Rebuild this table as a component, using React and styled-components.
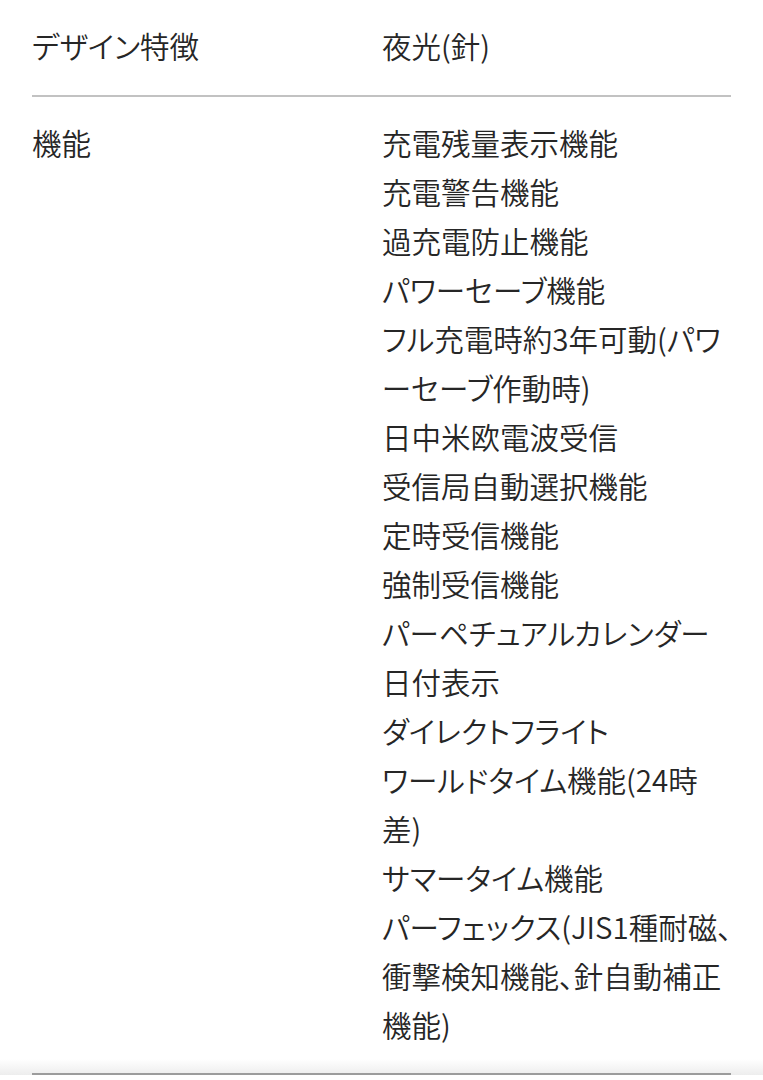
import React from 'react';
import styled, { createGlobalStyle } from 'styled-components';

const GlobalStyle = createGlobalStyle`
    html, body {
        margin: 0;
        padding: 0;
        background: #fff;
    }
    body {
        font-family: "Noto Sans CJK JP", Roboto, sans-serif;
        color: #262626;
    }
`;

const specs = [
    { label: 'デザイン特徴', values: [['夜光(針)']] },
    {
        label: '機能',
        values: [
            ['充電残量表示機能'],
            ['充電警告機能'],
            ['過充電防止機能'],
            ['パワーセーブ機能'],
            ['フル充電時約3年可動(パワ', 'ーセーブ作動時)'],
            ['日中米欧電波受信'],
            ['受信局自動選択機能'],
            ['定時受信機能'],
            ['強制受信機能'],
            ['パーペチュアルカレンダー'],
            ['日付表示'],
            ['ダイレクトフライト'],
            ['ワールドタイム機能(24時', '差)'],
            ['サマータイム機能'],
            ['パーフェックス(JIS1種耐磁、', '衝撃検知機能、針自動補正', '機能)'],
        ],
    },
];

const App = () => {
    return (
        <>
            <GlobalStyle />
            <Table>
                {specs.map((row, i) => (
                    <Row key={row.label} first={i === 0}>
                        <Label>{row.label}</Label>
                        <Values>
                            {row.values.map((lines, j) => (
                                <Item key={j}>
                                    {lines.map((line, k) => (
                                        <Line key={k}>{line}</Line>
                                    ))}
                                </Item>
                            ))}
                        </Values>
                    </Row>
                ))}
            </Table>
            <Footer>
                <FooterLine />
            </Footer>
        </>
    );
};

const Table = styled.div`
    padding: 0 32px;
`;

const Row = styled.div.withConfig({ shouldForwardProp: (p) => p !== 'first' })`
    display: grid;
    grid-template-columns: 350px 349px;
    padding: ${(p) => (p.first ? '21px 0 25px' : '21px 0 10px')};
    border-bottom: ${(p) => (p.first ? '2px solid #c2c2c2' : 'none')};
    font-size: 29.5px;
    font-weight: 350;
    line-height: 49px;
    font-feature-settings: "palt";
`;

const Label = styled.div`
    white-space: nowrap;
`;

const Values = styled.div`
    display: flex;
    flex-direction: column;
`;

const Item = styled.div``;

const Line = styled.div`
    white-space: nowrap;
`;

const Footer = styled.div`
    height: 16px;
    background: linear-gradient(to bottom, #ffffff, #ededed);
    display: flex;
    align-items: flex-end;
    padding: 0 32px;
`;

const FooterLine = styled.div`
    flex: 1;
    height: 2px;
    background: #9c9c9c;
`;

export default App;
